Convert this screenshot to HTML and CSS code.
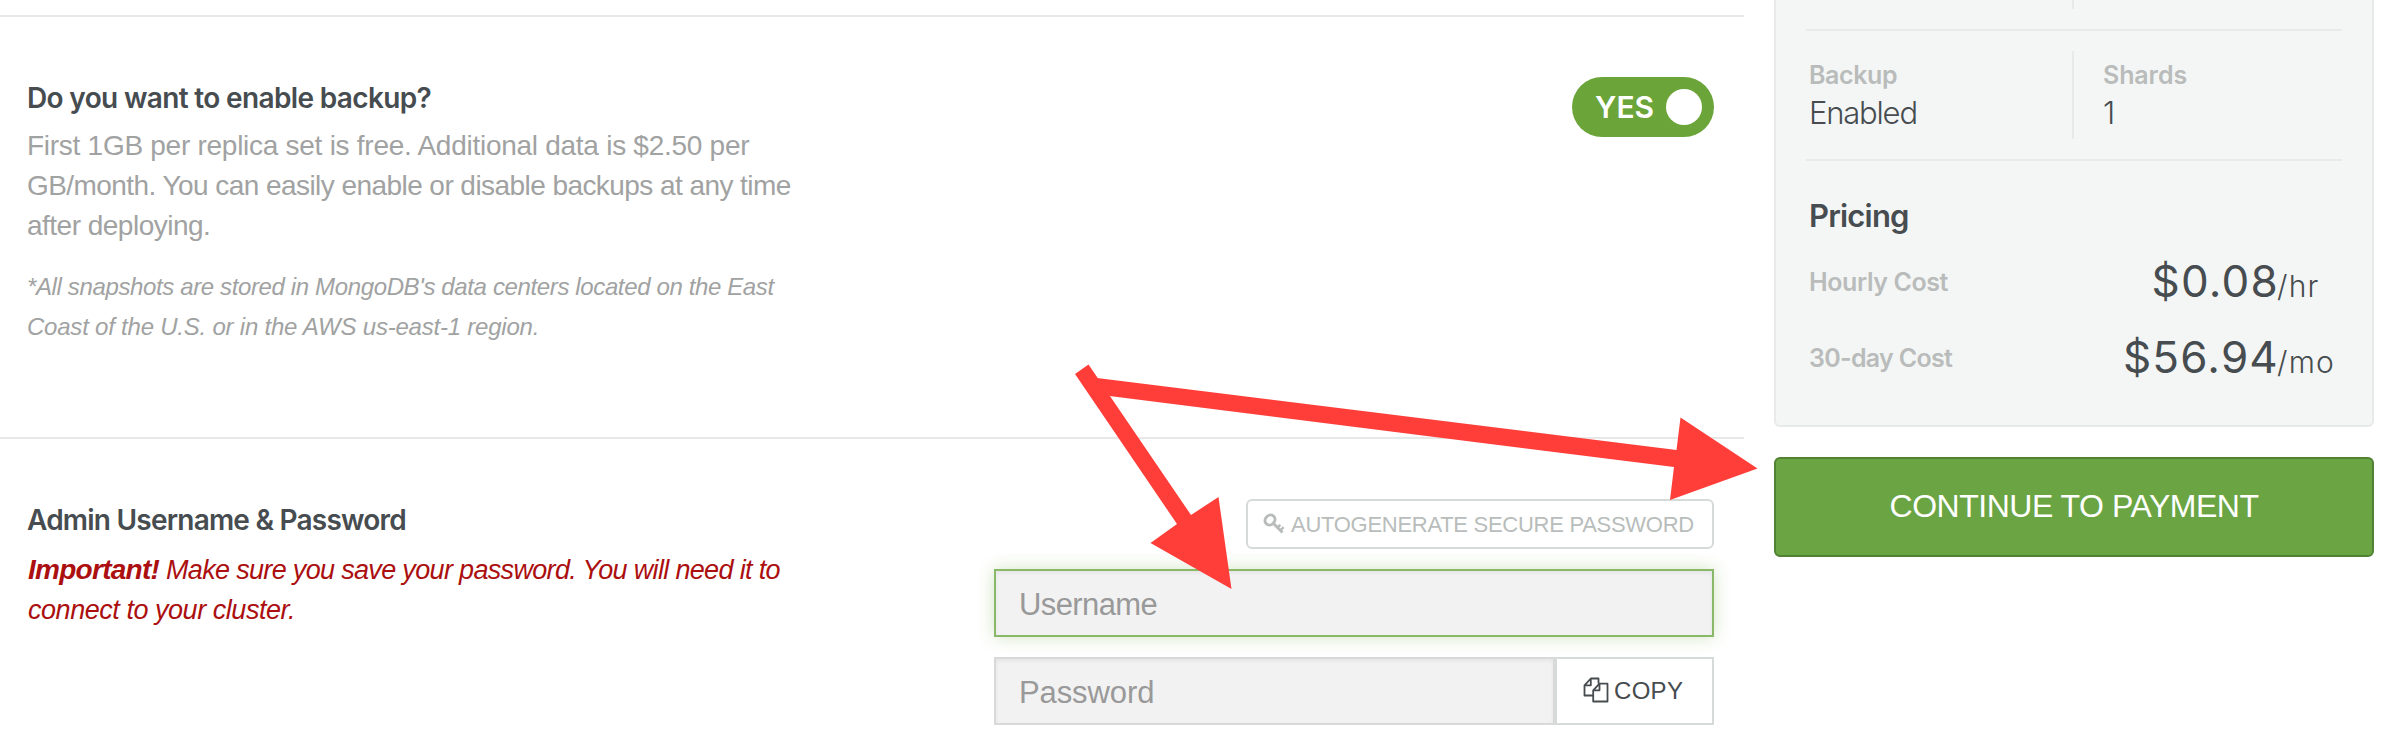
FILE: index.html
```html
<!DOCTYPE html>
<html lang="en">
<head>
<meta charset="utf-8">
<title>Cluster setup</title>
<link rel="stylesheet" href="styles.css">
</head>
<body>
<div class="page">
  <main class="main">
    <section class="section section-backup">
      <div class="copy">
        <h2 class="heading">Do you want to enable backup?</h2>
        <p class="body"><span class="b1">First 1GB per replica set is free. Additional data is $2.50 per</span><span class="b2">GB/month. You can easily enable or disable backups at any time</span><span class="b3">after deploying.</span></p>
        <p class="note"><span class="n1">*All snapshots are stored in MongoDB's data centers located on the East</span><span class="n2">Coast of the U.S. or in the AWS us-east-1 region.</span></p>
      </div>
      <div class="toggle"><span class="toggle-label">YES</span><span class="knob"></span></div>
    </section>
    <section class="section section-admin">
      <div class="copy">
        <h2 class="heading heading-admin">Admin Username &amp; Password</h2>
        <p class="warning"><span class="w1"><strong>Important!</strong> Make sure you save your password. You will need it to</span><span class="w2">connect to your cluster.</span></p>
      </div>
      <form class="form">
        <div class="auto">
          <svg class="key" width="22" height="22" viewBox="0 0 22 22" fill="none" stroke="#b8bdbb"><ellipse cx="7" cy="7" rx="5.3" ry="4.6" transform="rotate(-45 7 7)" stroke-width="3"/><path d="M10.5 10.5 19.5 19.5" stroke-width="3"/><path d="M13.8 15.2 17.4 11.8M17 17.8 20.6 14.2" stroke-width="2.4"/></svg>
          <span class="auto-label">AUTOGENERATE SECURE PASSWORD</span>
        </div>
        <div class="field field-focus"><span class="ph-user">Username</span></div>
        <div class="group">
          <div class="field field-pass"><span class="ph-pass">Password</span></div>
          <div class="copy-btn">
            <svg class="copy-icon" width="26" height="26" viewBox="0 0 26 26" fill="none" stroke="#464c4f" stroke-width="1.8" stroke-linejoin="round"><path d="M9.5 18.5H1.5V8.3L7.8 1.5H15.5V6.5M7.8 1.5V8.3H1.5M16.5 6.7 10.2 13.3V24.5H24.5V6.7ZM16.5 6.7V13.3H10.2"/></svg>
            <span class="copy-label">COPY</span>
          </div>
        </div>
      </form>
    </section>
  </main>
  <aside class="side">
    <div class="summary">
      <div class="stub"></div>
      <div class="specs">
        <div class="spec"><span class="label l-backup">Backup</span><span class="value">Enabled</span></div>
        <div class="spec spec-right"><span class="label l-shards">Shards</span><span class="value">1</span></div>
      </div>
      <h3 class="pricing">Pricing</h3>
      <div class="cost"><span class="label l-hourly">Hourly Cost</span><span class="price">$0.08</span><span class="unit">/hr</span></div>
      <div class="cost"><span class="label l-month">30-day Cost</span><span class="price">$56.94</span><span class="unit">/mo</span></div>
    </div>
    <div class="pay">CONTINUE TO PAYMENT</div>
  </aside>
  <svg class="arrows" width="2395" height="752" viewBox="0 0 2395 752" fill="#ff3e3a">
    <path d="M1075 374 1088.500 364.500 1191 515 1218.500 497 1231.500 589 1150.500 543 1177 524Z"/>
    <path d="M1097 378 1676.500 450 1680.500 417.500 1757.500 468.500 1670 500 1674 467 1109.500 396Z"/>
  </svg>
</div>
</body>
</html>
```
FILE: styles.css
```css
* { box-sizing: border-box; }
body, h2, h3, p { margin: 0; }
body {
  background: #fff;
  font-family: "Liberation Sans", Arial, sans-serif;
  color: #464c4f;
  overflow: hidden;
  white-space: nowrap;
}
.page { position: relative; display: flex; gap: 30px; width: 2395px; height: 752px; }
.main { width: 1744px; padding-top: 15px; }
.section {
  display: flex;
  justify-content: space-between;
  align-items: flex-start;
  height: 422px;
  padding: 60px 30px 0 26px;
  border-top: 2px solid #e7e8e8;
}
.section-admin { height: 315px; }
.copy { padding: 1px 0 0 1px; }
.heading { font: 600 28px/40px Inter, sans-serif; letter-spacing: -.65px; }
.heading-admin { letter-spacing: -.78px; }
.body { margin-top: 8px; font-size: 28px; line-height: 40px; color: #a1a2a2; }
.body span, .note span, .warning > span { display: block; }
.b1 { letter-spacing: -.27px; }
.b2 { letter-spacing: -.56px; }
.b3 { letter-spacing: -.51px; }
.note { margin-top: 21px; font-size: 24px; font-style: italic; line-height: 40px; color: #a1a2a2; }
.n1 { letter-spacing: -.37px; }
.n2 { letter-spacing: -.22px; }
.warning { margin: 10px 0 0 1px; font-size: 27px; font-style: italic; line-height: 40px; color: #ab0f0f; }
.warning strong { font-size: 28px; letter-spacing: -.73px; }
.w1 { letter-spacing: -.67px; }
.w2 { letter-spacing: -.46px; }
.toggle {
  display: flex;
  align-items: center;
  justify-content: space-between;
  width: 142px;
  height: 60px;
  padding: 0 12px 0 23px;
  border-radius: 30px;
  background: #6ba439;
}
.toggle-label { font: 600 30px/60px Inter, sans-serif; letter-spacing: 0; color: #fff; }
.knob { width: 36px; height: 36px; border-radius: 50%; background: #fff; }
.form { display: flex; flex-direction: column; align-items: flex-end; gap: 20px; width: 720px; }
.auto {
  display: flex;
  width: 468px;
  height: 50px;
  padding: 0 0 0 15px;
  border: 2px solid #d6dbd9;
  border-radius: 6px;
  color: #b8bdbb;
}
.key { margin: 12px 6px 0 0; }
.auto-label { font-size: 22px; line-height: 47px; letter-spacing: -.28px; }
.field {
  width: 720px;
  height: 68px;
  padding-left: 23px;
  border: 2px solid #d8dad9;
  background: #f2f2f2;
  box-shadow: inset 0 2px 4px rgba(0, 0, 0, .06);
  font-size: 31px;
  line-height: 68px;
  color: #999;
}
.field-focus {
  border-color: #88b868;
  box-shadow: inset 0 2px 4px rgba(0, 0, 0, .06), 0 0 16px rgba(107, 164, 57, .3);
}
.ph-user { letter-spacing: -.6px; }
.ph-pass { letter-spacing: -.1px; }
.group { display: flex; width: 720px; }
.field-pass { width: 561px; }
.copy-btn {
  display: flex;
  width: 159px;
  height: 68px;
  padding-left: 26px;
  border: 2px solid #d6dbd9;
  background: #fff;
}
.copy-icon { margin: 18px 5px 0 0; }
.copy-label { font-size: 24px; line-height: 63px; letter-spacing: .3px; }
.side { width: 600px; }
.summary {
  height: 427px;
  padding: 0 30px;
  border: 2px solid #e7eae9;
  border-top: 0;
  border-radius: 0 0 6px 6px;
  background: #f4f6f5;
}
.stub { width: 268px; height: 9px; border-right: 2px solid #e7eae9; }
.specs {
  display: grid;
  grid-template-columns: 268px 268px;
  height: 132px;
  margin-top: 20px;
  padding: 20px 0;
  border-top: 2px solid #e7eae9;
  border-bottom: 2px solid #e7eae9;
}
.spec { display: flex; flex-direction: column; gap: 3px; padding: 9px 0 0 3px; border-right: 2px solid #e7eae9; }
.spec-right { border: 0; padding-left: 29px; }
.label { font: 600 25px/30px Inter, sans-serif; color: #b9bcbb; }
.l-backup { letter-spacing: -.4px; }
.l-shards { letter-spacing: -.1px; }
.l-hourly { letter-spacing: -.4px; }
.l-month { letter-spacing: -.7px; }
.value { font: 300 31px/40px Inter, sans-serif; letter-spacing: -1.2px; }
.pricing { margin: 35px 0 20px 3px; font: 600 31px/40px Inter, sans-serif; letter-spacing: -.8px; }
.cost { display: grid; grid-template-columns: 1fr auto 65px; height: 76px; padding-left: 3px; }
.cost .label { margin-top: 11px; }
.price { margin-right: -2px; font: 400 44px/50px Inter, sans-serif; letter-spacing: 1.2px; }
.unit { font: 300 30px/60px Inter, sans-serif; letter-spacing: 1.2px; }
.pay {
  height: 100px;
  margin-top: 30px;
  border: 2px solid #518234;
  border-radius: 6px;
  background: #6ba543;
  color: #fff;
  font-size: 32px;
  line-height: 94px;
  letter-spacing: -.48px;
  text-align: center;
}
.arrows { position: absolute; left: 0; top: 0; pointer-events: none; }
```
